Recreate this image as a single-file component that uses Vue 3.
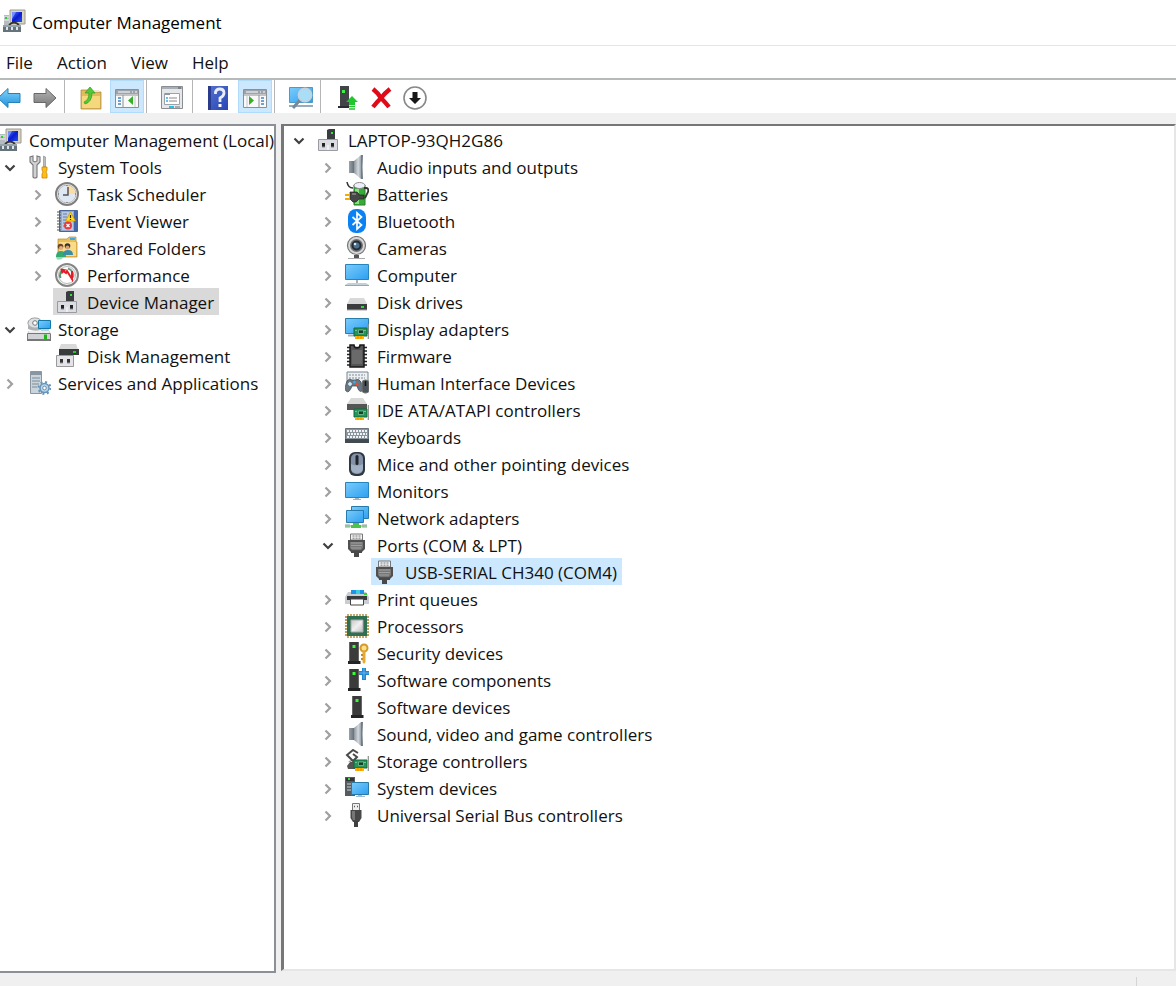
<script setup>
import { reactive, ref } from 'vue'

/* Shared pieces of the icon drawings */
const chip = '<path d="M9 14h13v8H9z" fill="#27955a" stroke="#0d6a3b"/><path d="M13.500 16h5v3.500h-5z" fill="#173d2b" stroke="#7fcfa0" stroke-width=".7"/><path d="M10 22h9v3h-9z" fill="#ffb000"/><path d="M13 22v3m3-3v3" stroke="#d68600" stroke-width=".7"/><path d="M23.300 10v15" stroke="#8d8d8d" stroke-width="1.200"/><path d="M11 16v1m9-1v1" stroke="#b8f0cc"/>'
const tower = '<path d="M4 1h10v19H4z" fill="#3b3b3b"/><path d="M3 20h12.500v3H3z" fill="#242424"/><path d="M4 1h1v19H4zm9 0h1v19h-1z" fill="#666"/><path d="M7.500 4h3v3h-3z" fill="#3f3"/>'
const adapter = '<path d="M11 9V2l2-1h6v10h-8z" fill="#3a3d40"/><path d="M15 4h2v2h-2z" fill="#38e038"/><path d="M2.500 11.500h19v11h-19z" fill="#dcdde2" stroke="#999aa2"/><path d="M6 15h3v4H6zm9 0h3v4h-3z" fill="#222"/><path d="M6 19h3m6 0h3" stroke="#888"/><path d="M12 17v5" stroke="#fff"/>'
const speaker = '<path d="M4 6h6v12H4z" fill="url(#steelDark)"/><path d="M9 6l7-6v24l-7-6z" fill="url(#steel)"/><path d="M16 0h2q-1 12 0 24h-2z" fill="#737c86"/>'
const plug = '<path d="M5.500 1h12v6h-12z" fill="#f1f1f1" stroke="#777"/><path d="M7.500 3h2m1 0h2m1 0h2m-8 2.200h2m1 0h2m1 0h2" stroke="#777" stroke-width="1"/><path d="M3 7h17v9l-3 3H6l-3-3z" fill="#505050"/><path d="M5 9h13v6l-2 2H7l-2-2z" fill="#777"/><path d="M6 10h11M6 12.500h11M6 15h10" stroke="#aaa" stroke-width=".8"/><path d="M6 18h11v2h-3v4H9v-4H6z" fill="#494949"/>'
const computerMgmt = '<path d="M8 1h15v14H8z" fill="#d7d4c2" stroke="#9c9a92"/><path d="M10 3h10v10H10z" fill="url(#royal)"/><path d="M10 3h4l-4 7z" fill="#7290ff"/><path d="M2 6h5v10H2z" fill="#b6bbc1"/><path d="M2 8h5M2 11h5" stroke="#eee"/><path d="M3 8h2v2H3z" fill="#2bd02b"/><path d="M7 16q5-5 10 0" fill="none" stroke="#333" stroke-width="1.800"/><path d="M1 16h18v7H1z" fill="#66737b"/><path d="M1 16h18v2H1z" fill="#94a2a9"/><path d="M4 18h2v3H4zm5 0h2v3H9zm5 0h2v3h-2z" fill="#dce5e9"/>'

const icons = {
  computerMgmt,
  tools: '<path d="M3 2v5l3 3v12q2 2 4 0V10l3-3V2l-3-1v5l-2 1-2-1V1z" fill="#d0d2d4" stroke="#777" stroke-width="1.100"/><path d="M16.500 1l2 1v10h-2z" fill="#bbb" stroke="#888" stroke-width=".6"/><path d="M15 12h5v3l-1 2 1 2v4h-5v-4l1-2-1-2z" fill="#ffbd19" stroke="#c98600" stroke-width=".8"/>',
  clock: '<circle cx="12" cy="12" r="11" fill="#fafafa" stroke="#7f7f7f" stroke-width="2"/><circle cx="12" cy="12" r="9" fill="#dfe7f2" stroke="#b7b7b7"/><path d="M12 12V3.500a8.500 8.500 0 0 1 8.500 8.500z" fill="#f9dea4"/><path d="M13 5v8H8" fill="none" stroke="#555" stroke-width="1.500"/><path d="M12 3v1m0 16v1M3 12h1m16 0h1" stroke="#555"/>',
  event: '<path d="M4.500 1.500h18v21h-18z" fill="#91a9d1" stroke="#48669a"/><path d="M7 3h11v18H7z" fill="#b8c9e4"/><path d="M8 5h4M8 8h4m-4 3h4m-4 3h4m-4 3h3" stroke="#637faa"/><path d="M19 2h3v20h-3z" fill="#4467a9"/><path d="M2 3h4M2 6h4M2 9h4m-4 3h4m-4 3h4m-4 3h4m-4 3h4" stroke="#555" stroke-width="1.100"/><path d="M15.500 3l5 9h-10z" fill="#ffdb25" stroke="#c69200" stroke-width=".7"/><path d="M15.500 6v3m0 1v1" stroke="#222" stroke-width="1.200"/><circle cx="13" cy="16.500" r="4" fill="#e33b42"/><path d="M11.500 15l3 3m0-3l-3 3" stroke="#fff" stroke-width="1.200"/>',
  shared: '<path d="M3 3h9l2-2h7v5h1v15H3z" fill="#e8bf5b" stroke="#bd8b24" stroke-width=".7"/><path d="M4 6h17v14H4z" fill="#f8dc8a"/><path d="M15 2h5v2h-5z" fill="#46a6df"/><circle cx="5.500" cy="10.500" r="2.800" fill="#6a4426"/><circle cx="6" cy="12" r="2" fill="#e4ae82"/><path d="M1 21q0-6 5-6t5 6z" fill="#35a871"/><circle cx="12.500" cy="10" r="2.800" fill="#333"/><circle cx="12.500" cy="11.500" r="2" fill="#d89f75"/><path d="M8 19q0-5 5-5t5 5z" fill="#3a8da5"/><path d="M1 21h8l-3 2.500H2z" fill="#8ddcb3"/>',
  performance: '<circle cx="12" cy="12" r="11" fill="#f5f5f5" stroke="#858585" stroke-width="2"/><circle cx="12" cy="12" r="8.500" fill="#fff" stroke="#bbb"/><path d="M5.500 15a7.500 7.500 0 0 1 3-9" fill="none" stroke="#559969" stroke-width="2"/><path d="M13 5.500a7 7 0 0 1 5 9" fill="none" stroke="#769a85" stroke-width="2"/><path d="M7 7l4 3 1-2 5 8V8" fill="none" stroke="#e21d25" stroke-width="2"/><path d="M5.500 5.500l6 1-5 5z" fill="#e21d25"/>',
  adapter,
  storage: '<ellipse cx="8" cy="6" rx="7" ry="5" fill="#d8dadb" stroke="#888"/><path d="M1 6v6q6 3 13 1V6z" fill="#aeb1b4"/><ellipse cx="8" cy="6" rx="6.500" ry="4.500" fill="#dfe1e2"/><circle cx="8" cy="6" r="2.300" fill="#fff" stroke="#777"/><path d="M11.500 3.500h12v8h-12z" fill="url(#screen)" stroke="#1279a8"/><path d="M14 13h8" stroke="#79a7bc"/><path d="M2 14h20l2 3v7H0v-7z" fill="#777"/><path d="M2 14h20l1 2H1z" fill="#eee"/><path d="M1 17h22v5H1z" fill="#d0d2d5"/><path d="M17 17.500h3v4.500h-3z" fill="#21b41d"/>',
  diskMgmt: '<path d="M6 0h15l2 5H4z" fill="#d9d9d9"/><path d="M4 5h20v6H4z" fill="#383b3c"/><path d="M18 7h3v2h-3z" fill="#1dcd2a"/><path d="M1.500 11.500h17v11h-17z" fill="#e4e4e8" stroke="#999"/><path d="M5 15h3v4H5zm7 0h3v4h-3z" fill="#333"/><path d="M5 19h3m4 0h3" stroke="#999"/>',
  services: '<path d="M3.500.500h11v22h-11z" fill="#c9d5dd" stroke="#8996a2"/><path d="M3 1h12v3H3z" fill="#8995a0"/><path d="M5 7h8M5 10h8m-8 3h7m-7 3h5" stroke="#7d8b96"/><path d="M5 2.500h3" stroke="#40d23a"/><circle cx="17.500" cy="17" r="4.500" fill="#b9d3e8" stroke="#6793b7" stroke-width="1.500"/><circle cx="17.500" cy="17" r="6" fill="none" stroke="#6793b7" stroke-width="2" stroke-dasharray="2 2.700"/><circle cx="17.500" cy="17" r="1.800" fill="#fff" stroke="#6793b7"/>',
  speaker,
  battery: '<path d="M2 0q1 6 6 6" fill="none" stroke="#333" stroke-width="1.500"/><path d="M9 3h11v20H9z" fill="#35ad35" stroke="#2a7a2e"/><ellipse cx="14.500" cy="3.500" rx="5.500" ry="3" fill="#eef" stroke="#888"/><path d="M10 7h4v15h-4z" fill="#86e27c"/><path d="M19 6h2q3 0 2 4l-3 6" fill="none" stroke="#333" stroke-width="1.800"/><path d="M5 10h7l2 2v1h5v4h-5l-3 3H8l-3-3z" fill="#464646" stroke="#222" stroke-width=".7"/><path d="M0 13h5M0 17h5" stroke="#f2ad00" stroke-width="2"/><path d="M7 12h4" stroke="#aaa"/>',
  bluetooth: '<rect x="3" y="0" width="18" height="24" rx="8" fill="#0b82f4"/><path d="M7.500 8l9 8-4.500 4V4l4.500 4-9 8" fill="none" stroke="#fff" stroke-width="1.700"/>',
  camera: '<circle cx="11.500" cy="9.500" r="9" fill="#d8d8d8" stroke="#777" stroke-width="1.200"/><circle cx="11.500" cy="9.500" r="6.500" fill="#6d7377"/><circle cx="11.500" cy="9.500" r="5" fill="#262c33"/><circle cx="11.500" cy="9.500" r="3" fill="#4d7090"/><circle cx="10" cy="8" r="1.300" fill="#d5e8fa"/><path d="M9 19h5v3H9z" fill="#555"/><path d="M3 22.500h17" stroke="#aaa"/>',
  computer: '<path d="M.5 1.500h23v15H.5z" fill="url(#screen)" stroke="#2785bd"/><path d="M11 17h2v3h-2z" fill="#aab5bf"/><path d="M3 20h18l3 2v1H0v-1z" fill="#c3d0da"/><path d="M0 22.500h24" stroke="#93a6b4"/>',
  disk: '<path d="M5 8h14l3 6H2z" fill="#d9d9d9"/><path d="M2 14h20v6H2z" fill="#3b3d3e"/><path d="M2 20h20" stroke="#aaa"/><path d="M16 16h3v2h-3z" fill="#27dd36"/>',
  display: '<path d="M.5 1.500h23v15H.5z" fill="url(#screen)" stroke="#287ea8"/><path d="M3 18.500h7" stroke="#9eb1c2" stroke-width="2"/><g transform="translate(0 -3)">' + chip + '</g>',
  firmware: '<path d="M2 3.500h20M2 7h20M2 10.500h20M2 14h20M2 17.500h20M2 21h20" stroke="#222" stroke-width="1.600"/><path d="M5 1h4q0 3 3 3t3-3h4v22H5z" fill="#555" stroke="#191919" stroke-width="1.500"/><path d="M7 6h10v14H7z" fill="#6a6a6a"/>',
  hid: '<path d="M2 1h21v12H2z" fill="#edf0f2" stroke="#77848c"/><path d="M4 4h16M4 7h16" stroke="#a3adb4" stroke-width="1.600" stroke-dasharray="2 1"/><path d="M2 10q2-3 5-1h3q4-2 6 2l1 9q-3 2-5-5H7q-3 8-6 5-2-2 1-10z" fill="#6a7884" stroke="#39444c" stroke-width=".7"/><path d="M3 13h4m-2-2v4" stroke="#d5f4ff" stroke-width="1.500"/><circle cx="12" cy="13" r="1.500" fill="#f24a2a"/><circle cx="9.500" cy="11" r="1.500" fill="#3ba8e2"/><rect x="17" y="9" width="7" height="13" rx="3" fill="#4c555b" stroke="#777"/><path d="M20.500 10v5" stroke="#111" stroke-width="1.500"/>',
  ide: '<path d="M6 0h12l4 6H2z" fill="#d8d8d8"/><path d="M2 6h20v6H2z" fill="#555"/><g transform="translate(0 -3)">' + chip + '</g>',
  keyboard: '<path d="M.5 3.500h23v14H.5z" fill="#8a949c" stroke="#68737b"/><path d="M2 6h20M3 9h19M2 12h20" stroke="#f1f2f3" stroke-width="1.800" stroke-dasharray="2 1"/><path d="M0 14h24v4H0z" fill="#434b52"/>',
  mouse: '<rect x="4" y="0" width="16" height="24" rx="6" fill="#2f3740"/><rect x="6" y="1.500" width="12" height="20.500" rx="5" fill="#8391a6"/><path d="M6 12q6 3 12 0v4q0 5-6 5t-6-5z" fill="#a1b0c3"/><rect x="10.500" y="3" width="3" height="10" rx="1.500" fill="#20252b"/>',
  monitor: '<path d="M.5 3.500h23v15H.5z" fill="url(#screen)" stroke="#2785bd"/><path d="M10 19h4v1h2v1H8v-1h2z" fill="#9ab5ca"/>',
  network: '<path d="M6.500.500h17v12h-17z" fill="url(#screen)" stroke="#287ba8"/><path d="M1.500 4.500h17v12h-17z" fill="url(#screen)" stroke="#287ba8"/><path d="M8 17h6v2h2v3H6v-3h2z" fill="#49c349"/><path d="M0 18h5v4H0zm17 0h5v4h-5z" fill="#c9cdce"/><path d="M0 20h22" stroke="#5bbf5b"/>',
  plug,
  printer: '<path d="M3 5h18l3 5v7H0v-7z" fill="#c9cdd1"/><path d="M2 9h20v4H2z" fill="#373b3e"/><path d="M6 3h13v4H6z" fill="#1b93e6"/><path d="M11 3h4v4h-4z" fill="#3ccce4"/><path d="M5.500 12h13v6h-13z" fill="#fff" stroke="#444"/><path d="M19 6h3v2h-3z" fill="#36cd38"/>',
  processor: '<path d="M3 0v24M6 0v24M9 0v24m3-24v24m3-24v24m3-24v24m3-24v24M0 3h24M0 6h24M0 9h24M0 12h24M0 15h24M0 18h24M0 21h24" stroke="#a77c23" stroke-width="1.300"/><path d="M2 2h20v20H2z" fill="#2e7051"/><path d="M6 6h12v12H6z" fill="url(#steelLight)" stroke="#aaa"/>',
  security: tower + '<circle cx="19" cy="7" r="3.500" fill="#ffe08a" stroke="#d39a2a" stroke-width="2"/><path d="M17.500 10h3v11l-1.500 2-1.500-2z" fill="#e5aa34"/><path d="M18 14h-2m2 4h-2" stroke="#c98a18" stroke-width="2"/>',
  component: tower + '<path d="M17 0h4v3h3v4h-3v5h-4V7h-3V3h3z" fill="#2185d2"/><path d="M19 0v11M14 5h10" stroke="#65b2ea"/>',
  software: '<g transform="translate(3)">' + tower + '</g>',
  storageCtl: '<path d="M2 17l3-4h9l4 7H3z" fill="#555"/><path d="M3 13l3-2h5" stroke="#ddd"/><path d="M13 4L8 1 2 6l6 6 4-4-4-3" fill="none" stroke="#4a4a4a" stroke-width="2"/><g transform="translate(0 -3)">' + chip + '</g>',
  system: '<path d="M0 1h10v19H0z" fill="#555c61"/><path d="M1 2h8v3H1z" fill="#343434"/><path d="M2 8h6m-6 3h6m-6 3h6" stroke="#a4a9ac" stroke-width="1.500"/><path d="M3 2h2v2H3z" fill="#38dc43"/><path d="M6.500 6.500h17v12h-17z" fill="url(#screen)" stroke="#287ba8"/><path d="M13 19h4v1h3v1h-9v-1h2z" fill="#a1bdd1"/>',
  usb: '<path d="M7.500.500h7v7h-7z" fill="#eee" stroke="#777"/><path d="M9 3.500h1m2 0h1" stroke="#555" stroke-width="1.500"/><path d="M5.500 7h11v8l-2.500 4H8l-2.500-4z" fill="#484848"/><path d="M7 8h3v9H8l-1-3z" fill="#777"/><path d="M9 18h4v6H9z" fill="#404040"/>',
  back: '<path d="M1 12L11 2.500v5h12v9H11v5z" fill="url(#arrowBlue)" stroke="#2581b8" stroke-linejoin="round"/>',
  forward: '<path d="M23 12L13 2.500v5H1v9h12v5z" fill="url(#arrowGrey)" stroke="#686868" stroke-linejoin="round"/>',
  folderUp: '<path d="M2 4h8l2 2h10v17H2z" fill="#e3bb5e" stroke="#a88334" stroke-width=".7"/><path d="M3 10h18v12H3z" fill="#f5d87b"/><path d="M14 4h6v2h-6z" fill="#eee8ce"/><path d="M5 16q5-2 5-9H6l5-6 5 6h-3q0 9-7 11z" fill="#52ca35" stroke="#2f9c20" stroke-width=".7"/>',
  treePane: '<path d="M.5 3.500h23v18H.5z" fill="#f9f9f9" stroke="#8b9095"/><path d="M1 4h22v4H1z" fill="#9da3ab"/><path d="M3 6h12m2 0h1m2 0h2" stroke="#fff"/><path d="M8 9v12M1 9h22" stroke="#8b9095"/><path d="M3 12h3m-3 3h3m-3 3h3" stroke="#4284c4" stroke-width="1.500"/><path d="M18 10v9l-5-4.500z" fill="#39ae29"/><path d="M20 9v12" stroke="#c6c9cc"/>',
  properties: '<path d="M.5.500h21v22H.5z" fill="#e5e7e9" stroke="#888e94"/><path d="M1 1h20v2H1z" fill="#a9afb6"/><path d="M17 2h3" stroke="#555"/><path d="M3.500 7.500h15v11h-15z" fill="#fff" stroke="#9ba3aa"/><path d="M4 7h5v2H4z" fill="#8c98a5"/><path d="M5 12h2m-2 3h2" stroke="#3ba9df" stroke-width="1.500"/><path d="M8 12h8m-8 3h8" stroke="#888"/><path d="M8 20h5v2H8z" fill="#20c3e7"/><path d="M14 21h5" stroke="#999" stroke-width="1.500"/>',
  help: '<path d="M1 0h20v24H1z" fill="url(#helpBlue)"/><path d="M1 0h3v24H1z" fill="#293b8d"/><path d="M8.500 8V6q1-3 4-3 4.500 0 4.500 4 0 3-4 5v4" fill="none" stroke="#e9edfb" stroke-width="2.800"/><path d="M11.500 18h3v3h-3z" fill="#fff"/>',
  actionPane: '<path d="M.5 3.500h23v18H.5z" fill="#f9f9f9" stroke="#8b9095"/><path d="M1 4h22v4H1z" fill="#9da3ab"/><path d="M3 6h12m2 0h1m2 0h2" stroke="#fff"/><path d="M16 9v12M1 9h22" stroke="#8b9095"/><path d="M18 12h3m-3 3h3m-3 3h3" stroke="#4284c4" stroke-width="1.500"/><path d="M6 10v9l5-4.500z" fill="#39ae29"/><path d="M4 9v12" stroke="#c6c9cc"/>',
  scan: '<path d="M.5 1.500h23v15H.5z" fill="url(#screen)" stroke="#4b9bc6"/><path d="M0 20h24" stroke="#99abb8" stroke-width="2"/><path d="M11 14l-7 8" stroke="#75899a" stroke-width="3"/><circle cx="16" cy="9" r="6.500" fill="#a9def9" stroke="#c3d2dc" stroke-width="1.800"/>',
  update: '<path d="M5 0h9v20H5z" fill="#414548"/><path d="M3 20h11v2H3z" fill="#292d2f"/><path d="M7 4h3v3H7z" fill="#3ef046"/><path d="M17 10l6 6h-3v3h-6v-3h-3z" fill="#21c52e"/><path d="M14 20.500h6m-6 2.500h6" stroke="#21c52e" stroke-width="1.500"/>',
  remove: '<path d="M4 3q5 4 8 9-4 4-8 9M21 3q-5 4-9 9 4 4 8 9" fill="none" stroke="#df0b19" stroke-width="4.400"/>',
  disable: '<circle cx="12" cy="12" r="11" fill="#fff" stroke="#888" stroke-width="1.600"/><path d="M9.500 6h5v6H18l-6 6-6-6h3.500z" fill="#171717"/>',
}

const menus = ['File', 'Action', 'View', 'Help']

const tools = [
  [{ icon: 'back', label: 'Back' }, { icon: 'forward', label: 'Forward' }],
  [{ icon: 'folderUp', label: 'Up one level' }, { icon: 'treePane', label: 'Show/Hide console tree', on: true }],
  [{ icon: 'properties', label: 'Properties' }],
  [{ icon: 'help', label: 'Help' }, { icon: 'actionPane', label: 'Show/Hide action pane', on: true }],
  [{ icon: 'scan', label: 'Scan for hardware changes' }],
  [{ icon: 'update', label: 'Update driver' }, { icon: 'remove', label: 'Uninstall device' }, { icon: 'disable', label: 'Disable device' }],
]

const node = (depth, icon, label, open) => ({ depth, icon, label, open })

const consoleTree = reactive([
  node('root', 'computerMgmt', 'Computer Management (Local)'),
  node(0, 'tools', 'System Tools', true),
  node(1, 'clock', 'Task Scheduler', false),
  node(1, 'event', 'Event Viewer', false),
  node(1, 'shared', 'Shared Folders', false),
  node(1, 'performance', 'Performance', false),
  node(1, 'adapter', 'Device Manager'),
  node(0, 'storage', 'Storage', true),
  node(1, 'diskMgmt', 'Disk Management'),
  node(0, 'services', 'Services and Applications', false),
])

const deviceTree = reactive([
  node(0, 'adapter', 'LAPTOP-93QH2G86', true),
  node(1, 'speaker', 'Audio inputs and outputs', false),
  node(1, 'battery', 'Batteries', false),
  node(1, 'bluetooth', 'Bluetooth', false),
  node(1, 'camera', 'Cameras', false),
  node(1, 'computer', 'Computer', false),
  node(1, 'disk', 'Disk drives', false),
  node(1, 'display', 'Display adapters', false),
  node(1, 'firmware', 'Firmware', false),
  node(1, 'hid', 'Human Interface Devices', false),
  node(1, 'ide', 'IDE ATA/ATAPI controllers', false),
  node(1, 'keyboard', 'Keyboards', false),
  node(1, 'mouse', 'Mice and other pointing devices', false),
  node(1, 'monitor', 'Monitors', false),
  node(1, 'network', 'Network adapters', false),
  node(1, 'plug', 'Ports (COM & LPT)', true),
  node(2, 'plug', 'USB-SERIAL CH340 (COM4)'),
  node(1, 'printer', 'Print queues', false),
  node(1, 'processor', 'Processors', false),
  node(1, 'security', 'Security devices', false),
  node(1, 'component', 'Software components', false),
  node(1, 'software', 'Software devices', false),
  node(1, 'speaker', 'Sound, video and game controllers', false),
  node(1, 'storageCtl', 'Storage controllers', false),
  node(1, 'system', 'System devices', false),
  node(1, 'usb', 'Universal Serial Bus controllers', false),
])

const panes = reactive([
  { name: 'console', title: 'Console tree', rows: consoleTree, selected: 'Device Manager' },
  { name: 'devices', title: 'Devices', rows: deviceTree, selected: 'USB-SERIAL CH340 (COM4)' },
])

const openMenu = ref('')
</script>

<template>
  <div class="window">
    <svg class="defs" width="0" height="0" aria-hidden="true">
      <defs>
        <linearGradient id="screen" x1="0" y1="0" x2="1" y2="1"><stop offset="0" stop-color="#7ccbfa" /><stop offset="1" stop-color="#2ba0f2" /></linearGradient>
        <linearGradient id="royal" x1="0" y1="0" x2="1" y2="1"><stop offset="0" stop-color="#5373ff" /><stop offset=".5" stop-color="#0b1cd0" /><stop offset="1" stop-color="#2550e8" /></linearGradient>
        <linearGradient id="steel"><stop offset="0" stop-color="#8b949c" /><stop offset=".6" stop-color="#d3d9de" /><stop offset="1" stop-color="#9aa3ab" /></linearGradient>
        <linearGradient id="steelDark"><stop offset="0" stop-color="#9aa3ab" /><stop offset="1" stop-color="#5e6770" /></linearGradient>
        <linearGradient id="steelLight" x1="0" y1="0" x2="1" y2="1"><stop offset="0" stop-color="#c7c7c7" /><stop offset=".5" stop-color="#f0f0f0" /><stop offset="1" stop-color="#bdbdbd" /></linearGradient>
        <linearGradient id="arrowBlue" x1="0" y1="0" x2="0" y2="1"><stop offset="0" stop-color="#86d4fb" /><stop offset="1" stop-color="#1b91dc" /></linearGradient>
        <linearGradient id="arrowGrey" x1="0" y1="0" x2="0" y2="1"><stop offset="0" stop-color="#b5b5b5" /><stop offset="1" stop-color="#777" /></linearGradient>
        <linearGradient id="helpBlue" x1="0" y1="0" x2="1" y2="1"><stop offset="0" stop-color="#5470cf" /><stop offset="1" stop-color="#2846b4" /></linearGradient>
      </defs>
    </svg>

    <header class="titlebar">
      <svg class="icon" viewBox="0 0 24 24" aria-hidden="true" v-html="icons.computerMgmt"></svg>
      <h1>Computer Management</h1>
    </header>

    <nav class="menubar" aria-label="Menu bar">
      <button v-for="m in menus" :key="m" type="button" :aria-expanded="openMenu === m" @click="openMenu = openMenu === m ? '' : m">{{ m }}</button>
    </nav>

    <div class="toolbar" role="toolbar" aria-label="Tools">
      <div v-for="(group, i) in tools" :key="i" class="group">
        <button v-for="t in group" :key="t.icon" type="button" :class="{ on: t.on }" :aria-label="t.label">
          <svg class="icon" viewBox="0 0 24 24" aria-hidden="true" v-html="icons[t.icon]"></svg>
        </button>
      </div>
    </div>

    <main class="panes">
      <section v-for="pane in panes" :key="pane.name" :class="['pane', pane.name]" :aria-label="pane.title">
        <ul role="tree" :aria-label="pane.title">
          <li v-for="row in pane.rows" :key="row.label" role="treeitem" :class="['row', 'depth-' + row.depth]" :aria-selected="row.label === pane.selected" :aria-expanded="row.open">
            <button v-if="row.open !== undefined" type="button" class="twisty" :class="{ open: row.open }" :aria-label="'Toggle ' + row.label" @click="row.open = !row.open">
              <svg viewBox="0 0 12 12" aria-hidden="true"><path d="M3.500 1.500L8 6l-4.500 4.500" /></svg>
            </button>
            <span v-else class="twisty"></span>
            <span class="item" @click="pane.selected = row.label">
              <svg class="icon" viewBox="0 0 24 24" aria-hidden="true" v-html="icons[row.icon]"></svg>
              <span class="label">{{ row.label }}</span>
            </span>
          </li>
        </ul>
      </section>
    </main>

    <footer class="statusbar"><span></span></footer>
  </div>
</template>

<style>
body {
  background: #f0f0f0;
}
</style>

<style scoped>
.window {
  display: flex;
  flex-direction: column;
  min-height: 100vh;
  overflow: hidden;
  background: #f0f0f0;
  color: #111;
  font: 17px/27px "Open Sans", "Noto Sans", sans-serif;
}

.defs {
  position: absolute;
}

.icon {
  flex: none;
  width: 24px;
  height: 24px;
}

button {
  padding: 0;
  border: 0;
  background: none;
  color: inherit;
  font: inherit;
}

.titlebar {
  display: flex;
  align-items: center;
  gap: 6px;
  height: 45px;
  padding-left: 2px;
  border-bottom: 1px solid #e5e5e5;
  background: #fff;
}

.titlebar .icon {
  margin-bottom: 4px;
}

h1 {
  margin: 0;
  color: #000;
  font-size: 17px;
  font-weight: 400;
}

.menubar {
  display: flex;
  gap: 24px;
  height: 32px;
  padding-left: 6px;
  border-bottom: 2px solid #b7babb;
  background: #fff;
}

.toolbar {
  display: flex;
  height: 33px;
  margin-left: -8px;
  background: #fff;
}

.group {
  display: flex;
  gap: 2px;
}

.group + .group {
  margin-left: 2px;
  padding-left: 9px;
  border-left: 1px solid #b5b5b5;
}

.group:last-child {
  gap: 0;
}

.group button {
  display: grid;
  place-items: center;
  width: 34px;
  padding-top: 2px;
}

.group button.on {
  background: #cce8ff;
  box-shadow: inset 0 0 0 1px #b0dbfb;
}

.panes {
  display: grid;
  grid-template-columns: 276px 1fr;
  gap: 5px;
  flex: 1;
  padding-top: 11px;
}

.pane {
  min-width: 0;
  background: #fff;
}

.console {
  border: solid #8b9097;
  border-width: 2px 2px 2px 0;
}

.devices {
  margin-bottom: 2px;
  padding-left: 5px;
  border: solid #777;
  border-width: 2px 2px 2px 3px;
  border-right-color: #e6e6e6;
  border-bottom-color: #e6e6e6;
}

ul {
  margin: 0;
  padding: 0;
  list-style: none;
}

.row {
  display: flex;
  height: 27px;
  white-space: nowrap;
}

.depth-1 {
  padding-left: 29px;
}

.depth-2 {
  padding-left: 57px;
}

.depth-root {
  margin-left: -29px;
}

.twisty {
  display: grid;
  flex: none;
  place-items: center;
  width: 20px;
  margin-right: 5px;
  padding-top: 2px;
}

.twisty svg {
  width: 12px;
  height: 12px;
  fill: none;
  stroke: #a0a0a0;
  stroke-width: 2.2;
}

.twisty.open svg {
  stroke: #404040;
  transform: rotate(90deg);
}

.item {
  display: flex;
  align-items: center;
  gap: 7px;
  padding: 0 5px 0 2px;
}

.console .depth-1 {
  padding-left: 28px;
}

.devices .item,
.console .depth-1 .item {
  gap: 8px;
}

.label {
  padding-top: 2px;
}

.console [aria-selected="true"] .item {
  background: #d9d9d9;
}

.devices [aria-selected="true"] .item {
  background: #cce8ff;
}

.statusbar {
  display: flex;
  justify-content: flex-end;
  height: 13px;
  padding-right: 39px;
}

.statusbar span {
  margin-top: 4px;
  border-left: 1px solid #d4d4d4;
}
</style>
